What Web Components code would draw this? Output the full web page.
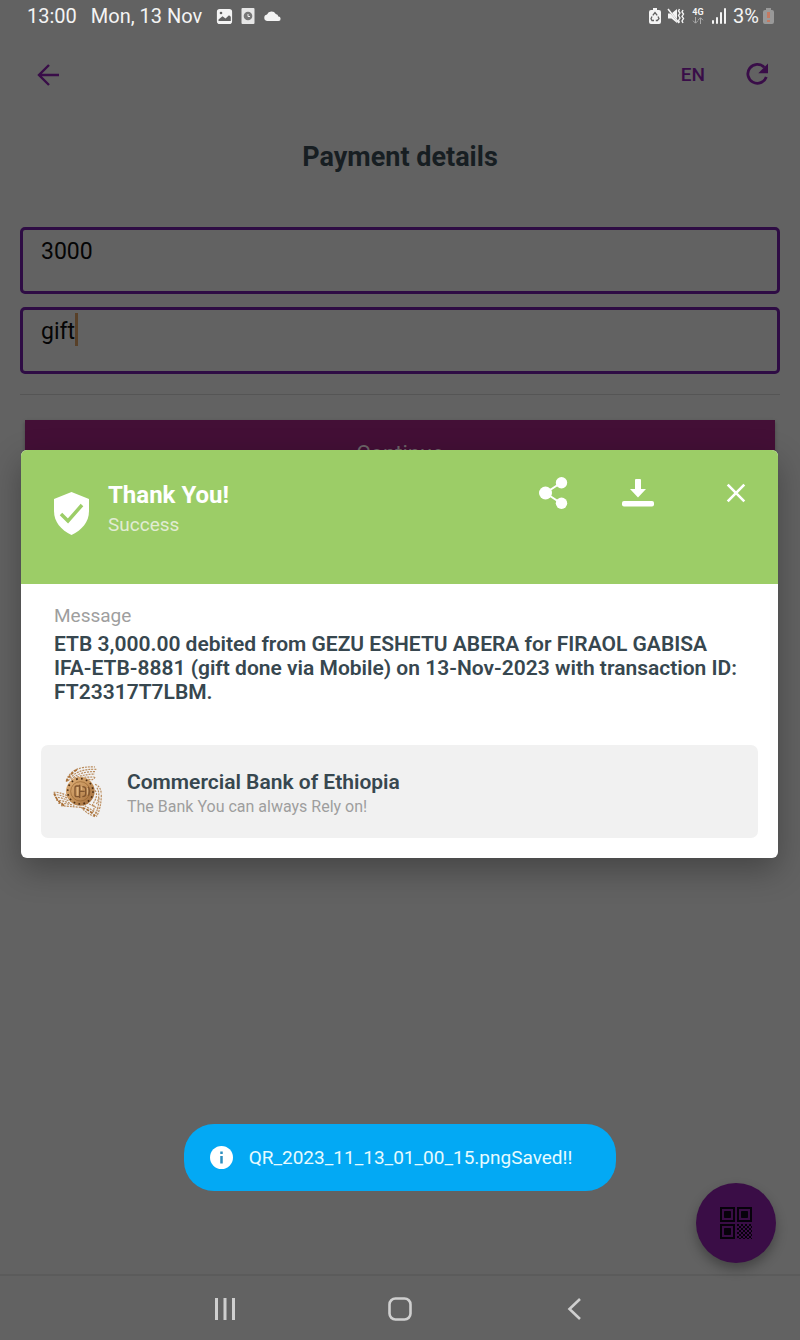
<!DOCTYPE html>
<html lang="en">
<head>
<meta charset="utf-8">
<meta name="viewport" content="width=device-width, initial-scale=1">
<title>Payment details</title>
<style>
  html, body { margin: 0; min-height: 100%; background: #626262; }
  body { font-family: Roboto, "Liberation Sans", sans-serif; }
</style>
</head>
<body>
<payment-app></payment-app>

<script>
const define = (name, html) => {
  const template = document.createElement('template');
  template.innerHTML = html;
  customElements.define(name, class extends HTMLElement {
    constructor() {
      super();
      this.attachShadow({ mode: 'open' }).append(template.content.cloneNode(true));
    }
  });
};

const buttonReset = 'button { appearance: none; border: 0; margin: 0; padding: 0; background: none; color: inherit; font: inherit; cursor: pointer; } svg { display: block; }';

define('status-bar', `
<style>
  :host { display: flex; justify-content: space-between; align-items: flex-start; height: 33px; padding: 0 26px 0 27px; color: #f4f4f4; font-size: 20px; line-height: 32px; }
  div { display: flex; align-items: center; }
  svg { display: block; }
  .left { gap: 14px; }
  .icons { gap: 8px; }
  .right { gap: 6px; }
  .charge { gap: 4px; }
</style>
<div class="left">
  <span>13:00</span><span>Mon, 13 Nov</span>
  <div class="icons">
    <svg width="17" height="17" viewBox="0 0 17 17"><rect x="1.7" y="1.7" width="13.6" height="13.6" rx="2" fill="#f4f4f4" stroke="#f4f4f4" stroke-width="1.6"/><path d="M2.500 13v-1.500l4-3.200 3 2.200 3.500-3.200 1.800 1.500V13z" fill="#626262"/><circle cx="5" cy="5" r="1.300" fill="#626262"/></svg>
    <svg width="14" height="18" viewBox="0 0 14 18"><rect x=".5" y="1" width="13" height="16" rx="1" fill="#e6e6e6"/><circle cx="7" cy="9" r="4.300" fill="#777"/><path d="M7 7v2.500h2" stroke="#eee" fill="none"/></svg>
    <svg width="18" height="18" viewBox="0 0 18 18"><path d="M4 14a3.300 3.300 0 0 1 0-6.500 5 5 0 0 1 8.800-.5 3 3 0 0 1 2.500 2.600A2.200 2.200 0 0 1 15.500 14z" fill="#f4f4f4"/></svg>
  </div>
</div>
<div class="right">
  <svg width="12" height="18" viewBox="0 0 12 18"><path d="M4 1h4v2h2q2 0 2 2v10q0 2-2 2H2q-2 0-2-2V5q0-2 2-2h2z" fill="#f4f4f4"/><path d="M3.800 8.300 6 5.500l2.200 2.800M9 9.500l1 2.200-1.700 1.800H6.800M5 13.500H3L2 11.700l1-2.200" stroke="#626262" stroke-width="1.300" fill="none"/></svg>
  <svg width="18" height="18" viewBox="0 0 18 18"><path d="M1 6.500h3.500L10 2v14l-5.500-4.500H1z" fill="#f4f4f4"/><path d="M0 1l13 16" stroke="#626262" stroke-width="1.500"/><path d="M1 2l11 14" stroke="#f4f4f4" stroke-width="1.500"/><path d="M12.500 2l-1 2 1.500 2-1.500 2.500 1.500 2.500-1.500 2.500 1 2M16 3l-1 2 1.500 2-1.500 2.500 1.500 2-1.500 2.500 1 2" stroke="#f4f4f4" stroke-width="1.400" fill="none"/></svg>
  <svg width="14" height="18" viewBox="0 0 14 18"><text x="7" y="8" font-size="9" font-weight="700" text-anchor="middle" fill="#f4f4f4">4G</text><path d="M4.500 10v6M2 13.700l2.500 2.500L7 13.700M9.500 17v-6M7 13.200l2.500-2.500 2.500 2.500" stroke="#aaa" fill="none"/></svg>
  <svg width="16" height="18" viewBox="0 0 16 18"><path d="M2 14v2M6 11v5M10 6v10M14 2v14" stroke="#f4f4f4" stroke-width="2" stroke-linecap="round"/></svg>
  <div class="charge"><span>3%</span>
  <svg width="11" height="18" viewBox="0 0 11 18"><path d="M3 1h5v2h1q2 0 2 2v10q0 2-2 2H2q-2 0-2-2V5q0-2 2-2h1z" fill="#999"/><path d="M5.500 5v6M5.500 13v2" stroke="#c47a62" stroke-width="3"/></svg></div>
</div>`);

define('app-bar', `
<style>
  ${buttonReset}
  :host { display: flex; align-items: center; justify-content: space-between; height: 84px; padding: 0 28px 0 32px; color: #390d48; }
  div { display: flex; align-items: center; gap: 37px; }
  .lang { font-size: 19px; font-weight: 500; line-height: 24px; }
</style>
<button aria-label="Back"><svg width="32" height="32" viewBox="0 0 32 32" fill="none" stroke="currentColor" stroke-width="2.400"><path d="M27 16H7M17 6L7 16l10 10"/></svg></button>
<div>
  <button class="lang">EN</button>
  <button aria-label="Refresh"><svg width="30" height="30" viewBox="0 0 30 30"><path d="M22.200 7.200A9.500 9.500 0 1 0 24.300 17" fill="none" stroke="currentColor" stroke-width="2.800"/><path d="M26 3.500v9.700h-9.700z" fill="currentColor"/></svg></button>
</div>`);

define('payment-field', `
<style>
  :host { display: flex; align-items: flex-start; height: 58px; padding: 3px 18px 0; border: 3px solid #2e0c44; border-radius: 5px; color: #050505; }
  ::slotted(input) { appearance: none; box-sizing: border-box; flex: 1; min-width: 0; height: 33px; padding: 4px 0 0; border: 0; outline: 0; background: none; color: inherit; font: 23px/29px Roboto, sans-serif; }
  ::slotted(input[data-active]) { flex: none !important; field-sizing: content; }
  i { display: none; width: 3px; height: 33px; background: #584028; }
  :host([active]) i { display: block; }
</style>
<slot></slot><i></i>`);

define('payment-form', `
<style>
  ${buttonReset}
  :host { display: block; padding: 24px 20px 0; }
  h1 { margin: 0 0 54px; font-size: 27px; font-weight: 700; line-height: 32px; text-align: center; color: #171e22; }
  form { display: grid; gap: 13px; }
  hr { width: 100%; margin: 7px 0 12px; border: 0; border-top: 1px solid #555; box-sizing: border-box; }
  .submit { height: 68px; margin: 0 5px; background: #430f36; color: #6c6468; font-size: 22px; line-height: 28px; box-shadow: 0 2px 4px rgba(0,0,0,.3); }
</style>
<h1>Payment details</h1>
<form>
  <payment-field><input type="text" value="3000" aria-label="Amount"></payment-field>
  <payment-field active><input data-active type="text" value="gift" aria-label="Reason"></payment-field>
  <hr>
  <button class="submit" type="button">Continue</button>
</form>`);

define('bank-card', `
<style>
  :host { display: flex; align-items: flex-start; gap: 12px; height: 93px; padding: 10px 4px 0; box-sizing: border-box; border-radius: 7px; background: #f1f1f1; }
  svg { display: block; flex: none; }
  .text { padding-top: 14px; }
  strong { display: block; color: #37474f; font-size: 21px; font-weight: 600; line-height: 26px; }
  span { display: block; color: #9e9e9e; font-size: 16px; line-height: 24px; }
</style>
<svg width="70" height="70" viewBox="0 0 210 210" fill="none">
  <defs><linearGradient id="coin" x1="0" y1="0" x2="1" y2="1"><stop offset="0" stop-color="#e0b07a"/><stop offset=".5" stop-color="#c6945c"/><stop offset="1" stop-color="#9b6535"/></linearGradient></defs>
  <g stroke="#b98a5a" stroke-width="3.500" stroke-dasharray="6 3">
    <path d="M64 76Q80 32 150 36"/><path d="M70 78Q92 40 154 43"/><path d="M78 74Q104 48 152 50"/><path d="M88 70Q112 58 150 57"/><path d="M100 68Q124 66 148 66"/><path d="M130 72Q144 78 150 66"/>
    <path d="M26 112Q42 110 66 122"/><path d="M26 119Q46 118 68 130"/><path d="M30 127Q48 126 72 138"/><path d="M34 136Q54 136 78 146"/><path d="M40 145Q60 144 88 151"/><path d="M48 152Q70 154 108 157"/>
    <path d="M150 88Q168 94 169 118"/><path d="M156 98Q168 120 154 148"/><path d="M150 106Q162 120 142 150"/><path d="M169 120Q168 162 154 185"/><path d="M162 128Q162 156 150 182"/><path d="M146 150Q150 164 140 176"/><path d="M108 156Q122 174 152 186"/><path d="M112 148Q132 160 156 174"/><path d="M124 144Q142 150 160 162"/>
  </g>
  <path d="M64 80Q76 56 96 44M28 115Q34 138 58 152M112 158Q136 166 150 183" stroke="#a86e35" stroke-width="5" stroke-dasharray="9 4"/>
  <circle cx="106" cy="109" r="43" fill="url(#coin)"/>
  <circle cx="106" cy="109" r="38" stroke="#4b2e14" stroke-width="5" stroke-dasharray="5 10"/>
  <circle cx="106" cy="109" r="29" stroke="#94622f" stroke-width="2"/>
  <path d="M104 93H95q-5 0-5 6v20q0 6 5 6h9M104 89v40M104 109h15M112 95q10 0 10 7v15q0 8-10 8M130 96q6 13 0 26" stroke="#80552f" stroke-width="4"/>
  <path d="M98 96v26M110 95v10M128 99v20" stroke="#ecc89b" stroke-width="2"/>
</svg>
<div class="text"><strong>Commercial Bank of Ethiopia</strong><span>The Bank You can always Rely on!</span></div>`);

define('success-dialog', `
<style>
  ${buttonReset}
  :host { display: block; overflow: hidden; border-radius: 6px; background: #fff; box-shadow: 0 12px 32px rgba(0,0,0,.3); }
  header { display: flex; align-items: flex-start; justify-content: space-between; height: 134px; padding: 27px 26px 0 30px; box-sizing: border-box; background: #9ccd67; color: #fff; }
  .status { display: flex; gap: 16px; }
  .status svg { margin-top: 13px; }
  h2 { margin: 0; font-size: 24px; font-weight: 700; line-height: 36px; }
  .status p { margin: 0; color: #e1ecd3; font-size: 19px; line-height: 24px; }
  .actions { display: flex; }
  .share { margin-right: 53px; }
  .download { margin-right: 66px; }
  .body { padding: 20px 20px 20px; }
  .message { margin: 0 13px 41px; }
  .message h3 { margin: 0 0 4px; color: #9e9e9e; font-size: 19px; font-weight: 400; line-height: 24px; }
  .message p { margin: 0; color: #37474f; font-size: 21px; font-weight: 600; line-height: 24px; }
</style>
<header>
  <div class="status">
    <svg width="41" height="46" viewBox="0 0 41 46"><path d="M20.500 2L38 9v12c0 11-7 19-17.500 24C10 40 3 32 3 21V9z" fill="#fff"/><path d="M10 24l7 7 14-16" fill="none" stroke="#9ccd67" stroke-width="3.500"/></svg>
    <div><h2>Thank You!</h2><p>Success</p></div>
  </div>
  <div class="actions">
    <button class="share" aria-label="Share"><svg width="32" height="32" viewBox="0 0 32 32" fill="#fff"><path d="M24.500 5.500L8.500 16l16 10.500" fill="none" stroke="#fff" stroke-width="2"/><circle cx="8.500" cy="16" r="6.500"/><circle cx="24.500" cy="5.700" r="5.700"/><circle cx="24.500" cy="26.300" r="5.700"/></svg></button>
    <button class="download" aria-label="Download"><svg width="32" height="32" viewBox="0 0 32 32" fill="#fff"><rect y="24" width="32" height="5.500" rx="2"/><path d="M13 3q0-1 1-1h4q1 0 1 1v9h5l-8 8.500L8 12h5z"/></svg></button>
    <button aria-label="Close"><svg width="32" height="32" viewBox="0 0 32 32" fill="none" stroke="#fff" stroke-width="2.600"><path d="M7.700 7.700l16.600 16.600M24.300 7.700L7.700 24.300"/></svg></button>
  </div>
</header>
<div class="body">
  <section class="message"><h3>Message</h3><p>ETB 3,000.00 debited from GEZU ESHETU ABERA for FIRAOL GABISA IFA-ETB-8881 (gift done via Mobile) on 13-Nov-2023 with transaction ID: FT23317T7LBM.</p></section>
  <bank-card></bank-card>
</div>`);

define('toast-message', `
<style>
  :host { display: flex; align-items: center; gap: 15px; height: 67px; padding: 0 44px 0 25px; box-sizing: border-box; border-radius: 30px; background: #03a9f4; color: #e6fbff; font-size: 19px; line-height: 24px; white-space: nowrap; }
  svg { display: block; }
</style>
<svg width="25" height="25" viewBox="0 0 25 25"><circle cx="12.500" cy="12.500" r="11.500" fill="#fff"/><path d="M12.500 6.500v2.500M12.500 11v7.500" stroke="#2d8fc0" stroke-width="2.500"/></svg>
<span><slot></slot></span>`);

define('qr-button', `
<style>
  ${buttonReset}
  :host { display: block; }
  button { display: grid; place-items: center; width: 80px; height: 80px; border-radius: 50%; background: #3a0d46; color: #07020b; box-shadow: 0 6px 12px rgba(0,0,0,.3); }
</style>
<button aria-label="Scan QR code"><svg width="32" height="32" viewBox="0 0 32 32">
  <defs><pattern id="check" width="4" height="4" patternUnits="userSpaceOnUse" x="17" y="17"><path d="M0 0h2v2H0zM2 2h2v2H2z" fill="currentColor"/></pattern></defs>
  <path d="M1 1h13v13H1zM18 1h13v13H18zM1 18h13v13H1z" fill="none" stroke="currentColor" stroke-width="2"/>
  <path d="M4.500 4.500h6v6h-6zM21.500 4.500h6v6h-6zM4.500 21.500h6v6h-6z" fill="currentColor" stroke="currentColor"/>
  <rect x="17" y="17" width="15" height="15" fill="url(#check)"/>
</svg></button>`);

define('system-nav', `
<style>
  ${buttonReset}
  :host { display: flex; justify-content: space-around; align-items: center; height: 66px; padding: 2px 17% 0; box-sizing: border-box; border-top: 2px solid #5b5b5b; color: #cfcfcf; }
  svg { fill: none; stroke: currentColor; }
</style>
<button aria-label="Recents"><svg width="32" height="32" viewBox="0 0 32 32" stroke-width="3"><path d="M8.500 5v22M17 5v22M25.500 5v22"/></svg></button>
<button aria-label="Home"><svg width="32" height="32" viewBox="0 0 32 32" stroke-width="2.600"><rect x="5.500" y="5.500" width="21" height="21" rx="6"/></svg></button>
<button aria-label="Back"><svg width="32" height="32" viewBox="0 0 32 32" stroke-width="2.600"><path d="M20 6L9.500 16 20 26"/></svg></button>`);

define('payment-app', `
<style>
  :host { position: relative; display: flex; flex-direction: column; min-height: 100vh; }
  main { flex: 1; }
  .overlay { position: absolute; inset: 33px 22px 65px 21px; display: flex; align-items: center; }
  success-dialog { flex: 1; }
  .toast { position: absolute; left: 0; right: 0; bottom: 149px; display: flex; justify-content: center; }
  qr-button { position: absolute; right: 24px; bottom: 77px; }
</style>
<status-bar></status-bar>
<app-bar></app-bar>
<main><payment-form></payment-form></main>
<system-nav></system-nav>
<qr-button></qr-button>
<div class="overlay"><success-dialog role="dialog" aria-label="Thank You!"></success-dialog></div>
<div class="toast"><toast-message role="status">QR_2023_11_13_01_00_15.pngSaved!!</toast-message></div>`);
</script>
</body>
</html>
